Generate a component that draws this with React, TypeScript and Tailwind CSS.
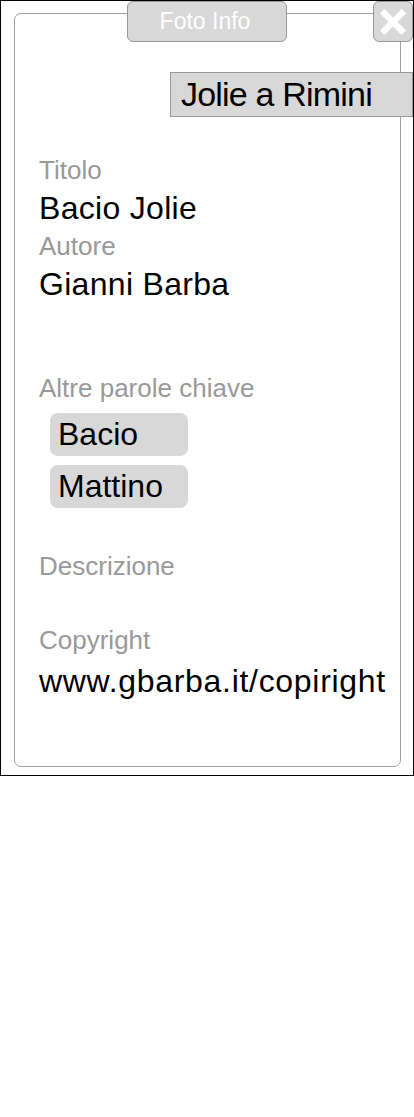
import { X } from "lucide-react";

const label = "text-[26px] leading-[38px] text-[#999999]";
const value = "text-[32px] leading-[38px] text-black tracking-[0.3px]";

function Tag({ text }: { text: string }) {
  return (
    <div className="ml-[11px] flex h-[43px] w-[138px] items-center rounded-[8px] bg-[#d8d8d8] pl-[8px] text-[32px] leading-[43px] text-black">
      {text}
    </div>
  );
}

export default function App() {
  return (
    <div className="min-h-screen bg-white font-['Liberation_Sans',Arial,sans-serif]">
      <div className="relative h-[776px] w-[414px] border border-black">
        {/* Panel */}
        <div className="mt-[12px] ml-[13px] mr-[12px] flex h-[754px] flex-col rounded-[7px] border border-[#a0a0a0] pl-[24px]">
          <div className="mt-[58px] mr-[-13px] flex h-[45px] w-[243px] items-center self-end border border-[#999999] bg-[#d8d8d8] pl-[10px] text-[34px] tracking-[-0.8px] text-black">
            Jolie a Rimini
          </div>

          <div className={`${label} mt-[34px]`}>Titolo</div>
          <div className={value}>Bacio Jolie</div>
          <div className={label}>Autore</div>
          <div className={value}>Gianni Barba</div>

          <div className={`${label} mt-[66px]`}>Altre parole chiave</div>
          <div className="mt-[6px] flex flex-col gap-[9px]">
            <Tag text="Bacio" />
            <Tag text="Mattino" />
          </div>

          <div className={`${label} mt-[39px]`}>Descrizione</div>
          <div className={`${label} mt-[36px]`}>Copyright</div>
          <div className="mt-[3px] text-[32px] leading-[38px] tracking-[0.7px] text-black">www.gbarba.it/copiright</div>
        </div>

        {/* Tab title */}
        <div className="absolute left-[126px] top-0 flex h-[41px] w-[160px] items-center justify-center rounded-[6px] border border-[#999999] bg-[#d8d8d8] pr-[4px] text-[23px] text-white">
          Foto Info
        </div>

        {/* Close button */}
        <div className="absolute left-[372px] top-0 flex h-[41px] w-[40px] items-center justify-center rounded-[6px] border border-[#999999] bg-[#d8d8d8]">
          <X size={34} strokeWidth={4.5} strokeLinecap="square" className="text-white" />
        </div>
      </div>
    </div>
  );
}
